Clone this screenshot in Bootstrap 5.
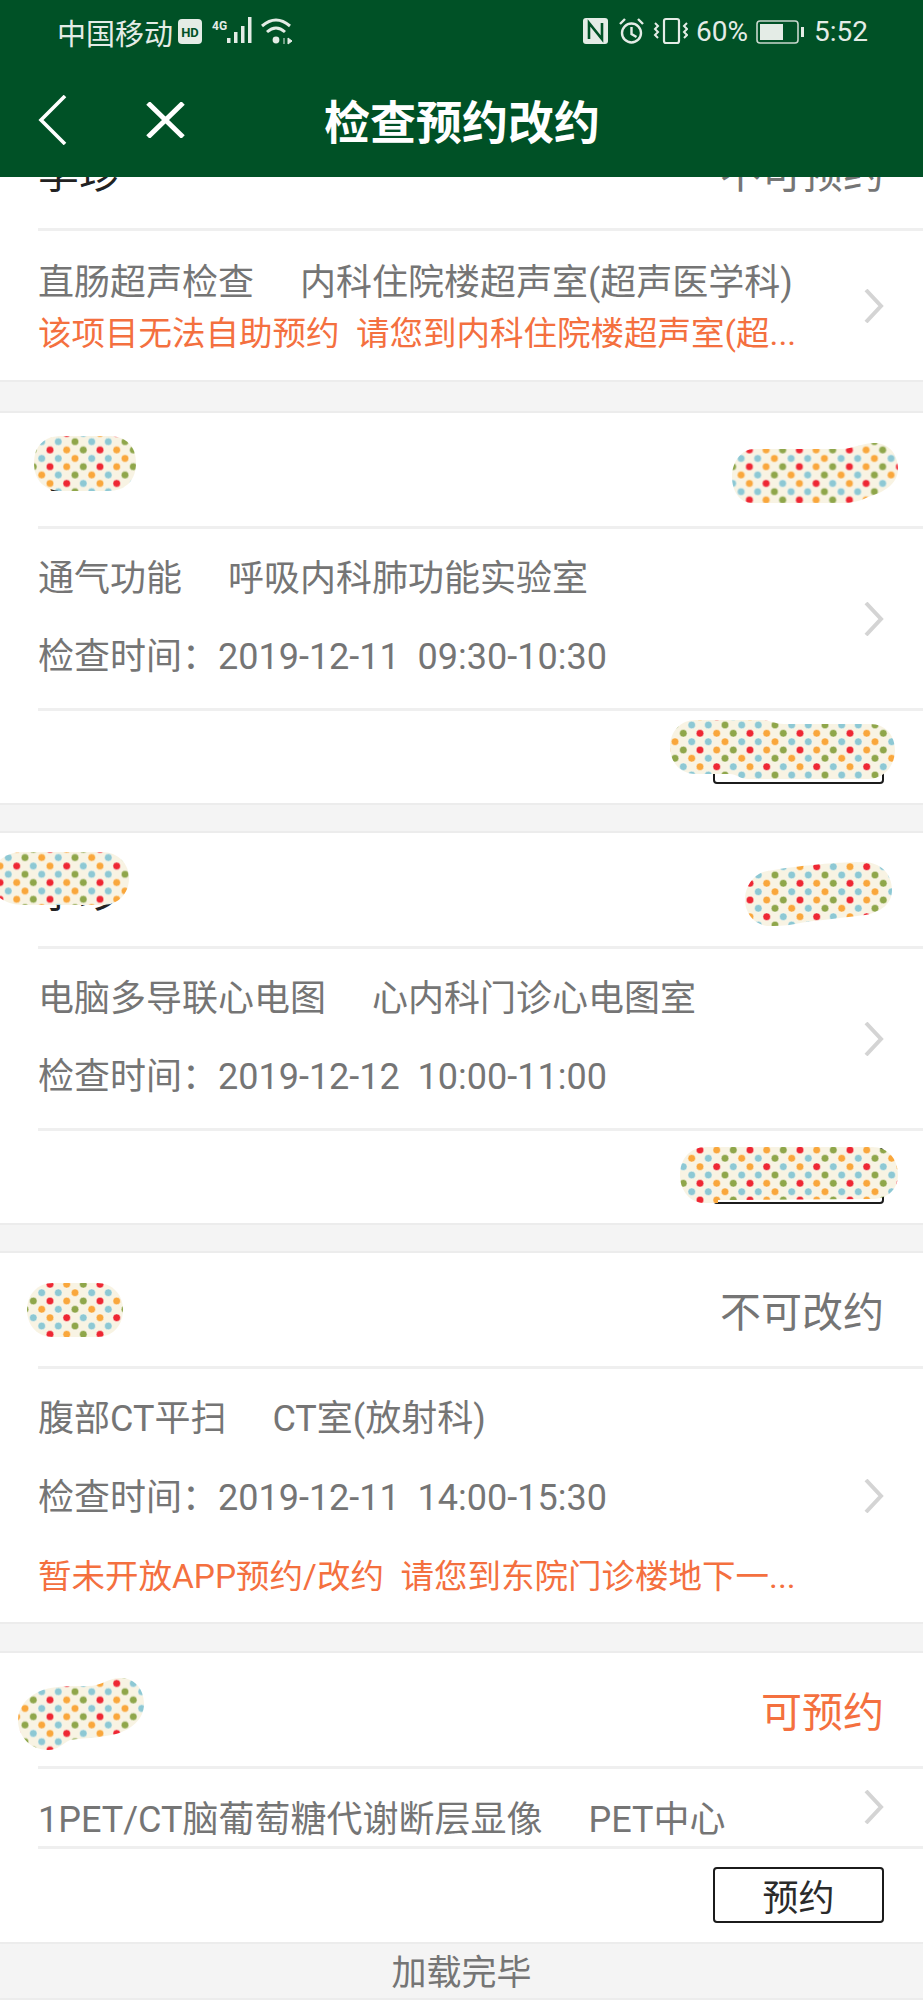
<!DOCTYPE html>
<html lang="zh">
<head>
<meta charset="utf-8">
<title>检查预约改约</title>
<link rel="stylesheet" href="https://cdn.jsdelivr.net/npm/bootstrap@5.3.0/dist/css/bootstrap.min.css">
<style>
body{background:#f4f4f4;font-family:Roboto,"Noto Sans CJK SC",sans-serif;color:#757575;width:923px;height:2000px;overflow:hidden}
.app-head{background:#005126;height:177px;color:#fff;position:relative}
.status-row{height:66px;padding:0 55px 2px 57px;font-size:28px;color:#e4ece6;line-height:1}
.status-cn{font-size:29px;width:121px;font-family:"Noto Sans CJK SC",sans-serif}
.title-row{height:111px;position:relative}
.title-text{font-size:46px;font-weight:700;line-height:1;margin:0 0 6px 324px;color:#fff;font-family:"Noto Sans CJK SC",sans-serif}
.ico-close{position:absolute;left:146px;top:36px}
.ico-back{position:absolute;left:38px;top:29px}
.rec{background:#fff;border-top:2px solid #ececec;border-bottom:2px solid #ececec;padding-left:38px;position:relative;margin-bottom:26px}
.rec-first{border-top:0;height:205px;margin-bottom:29px}
.rec-gap-last{margin-bottom:27px}
.rec-head{padding:8px 39px 0 0;height:116px;border-bottom:3px solid #efefef;font-size:41px;line-height:1}
.rec-first .rec-head{height:54px;padding-top:0;overflow:hidden;align-items:flex-start!important}
.rec-first .rec-head>*{margin-top:-23px}
.who{color:#222}
.state-open{color:#f4703f}
.rec-body{padding-right:39px;border-bottom:3px solid #efefef;font-size:36px;line-height:1.2}
.body-lines{display:flex;flex-direction:column;justify-content:center;gap:35px;flex:1;min-width:0}
.h-two{height:182px}
.h-plain{height:80px}
.h-tight{height:149px;border-bottom:0}
.h-tight .body-lines{gap:8.5px;padding-top:5px}
.h-three{height:253px;border-bottom:0}
.h-three .body-lines{gap:36px;padding-top:4px}
.gap-name{margin-right:46px}
.warn{color:#f4703f;font-size:33.5px;white-space:nowrap}
.rec-foot{height:92px;padding:17px 39px 0 0}
.rec-foot-last{height:93px;padding-top:18px}
.act-btn{width:171px;height:56px;border:2px solid #1b1b1b;border-radius:4px;background:#fff;color:#2b2b2b;font-size:36px;line-height:1;padding:0;font-family:"Noto Sans CJK SC",sans-serif}
.chev{flex:none}
.chev-high{margin-bottom:22px}
.end-note{font-size:35px;line-height:1;height:56px;text-align:center;padding-top:8px;border-bottom:2px solid #ececec;font-family:"Noto Sans CJK SC",sans-serif}
.patch{position:absolute;display:block;z-index:2}
.defs-holder{position:absolute;width:0;height:0}
.p-a{left:34px;top:23px}
.p-b{left:732px;top:30px}
.p-c{left:670px;top:307px}
.p-d{left:0;top:19px}
.p-e{left:745px;top:29px}
.p-f{left:680px;top:314px}
.p-g{left:27px;top:30px}
.p-h{left:18px;top:25px}
</style>
</head>
<body>
<svg class="defs-holder" aria-hidden="true"><defs>
<pattern id="dots" patternUnits="userSpaceOnUse" width="50" height="50">
<rect width="50" height="50" fill="#f8f3e3"/>
<g fill="#8fa64a" stroke="#fdfbf3" stroke-width=".5"><circle cx="0" cy="4" r="3.8"/><circle cx="50" cy="4" r="3.8"/><circle cx="8.3" cy="12.3" r="3.8"/><circle cx="8.3" cy="29" r="3.8"/><circle cx="0" cy="37.3" r="3.8"/><circle cx="50" cy="37.3" r="3.8"/></g>
<g fill="#8dc8d4" stroke="#fdfbf3" stroke-width=".5"><circle cx="16.7" cy="4" r="3.8"/><circle cx="33.3" cy="4" r="3.8"/><circle cx="16.7" cy="20.7" r="3.8"/><circle cx="33.3" cy="20.7" r="3.8"/><circle cx="33.3" cy="37.3" r="3.8"/><circle cx="8.3" cy="45.7" r="3.8"/></g>
<g fill="#ee2733" stroke="#fdfbf3" stroke-width=".5"><circle cx="25" cy="12.3" r="3.8"/><circle cx="25" cy="29" r="3.8"/><circle cx="41.7" cy="45.7" r="3.8"/></g>
<g fill="#f9a73c" stroke="#fdfbf3" stroke-width=".5"><circle cx="41.7" cy="12.3" r="3.8"/><circle cx="41.7" cy="29" r="3.8"/><circle cx="0" cy="20.7" r="3.8"/><circle cx="50" cy="20.7" r="3.8"/><circle cx="16.7" cy="37.3" r="3.8"/><circle cx="25" cy="45.7" r="3.8"/></g>
</pattern>
<pattern id="dots-a" href="#dots" x="-9" y="1.7"/>
<pattern id="dots-b" href="#dots" x="-7.6" y="-5.3"/>
<pattern id="dots-c" href="#dots" x="5" y="1"/>
<pattern id="dots-d" href="#dots" x="25" y="-31.7"/>
<pattern id="dots-e" href="#dots" x="30" y="9"/>
<pattern id="dots-f" href="#dots" x="-5" y="-26"/>
<pattern id="dots-g" href="#dots" x="-2" y="-11"/>
<pattern id="dots-h" href="#dots" x="7" y="9.7"/>
</defs></svg>

<header class="app-head">
  <div class="status-row d-flex align-items-center justify-content-between">
    <div class="d-flex align-items-center">
      <span class="status-cn text-nowrap">中国移动</span>
      <svg width="116" height="34" viewBox="0 0 116 34" fill="none">
        <rect x="0" y="4" width="24" height="25" rx="4" fill="#e4ece6"/>
        <text x="12" y="21.5" font-size="13" font-weight="700" text-anchor="middle" fill="#005126" font-family="Roboto">HD</text>
        <text x="34" y="15" font-size="12" font-weight="700" fill="#e4ece6" font-family="Roboto">4G</text>
        <g fill="#e4ece6"><rect x="49" y="23" width="3.5" height="5"/><rect x="56" y="17" width="3.5" height="11"/><rect x="63" y="11" width="3.5" height="17"/><rect x="70" y="2" width="3.5" height="26"/></g>
        <g stroke="#e4ece6" stroke-width="3"><path d="M84 11Q98 -1 112 11"/><path d="M89 17Q98 9 107 17"/></g>
        <circle cx="98" cy="25" r="3.4" fill="#e4ece6"/>
        <path d="M106 23v6M110 23l4 3-4 3z" stroke="#e4ece6" stroke-width="1" fill="#e4ece6"/>
      </svg>
    </div>
    <div class="d-flex align-items-center">
      <svg width="105" height="34" viewBox="0 0 105 34" fill="none">
        <rect x="0" y="3" width="25" height="26" rx="3" fill="#e4ece6"/>
        <path d="M6 24V8l13 16V8" stroke="#005126" stroke-width="2.6"/>
        <circle cx="48.5" cy="18" r="9.5" stroke="#e4ece6" stroke-width="2.4"/>
        <path d="M48.5 12v7l5 3M37 9l5-5M60 9l-5-5" stroke="#e4ece6" stroke-width="2.4"/>
        <rect x="81" y="4" width="15" height="24" rx="2" stroke="#e4ece6" stroke-width="2.2"/>
        <path d="M72 8l3 3-3 3 3 3-3 3 3 3M104 8l-3 3 3 3-3 3 3 3-3 3" stroke="#e4ece6" stroke-width="2"/>
      </svg>
      <span class="ms-2">60%</span>
      <svg class="ms-2" width="50" height="34" viewBox="0 0 50 34" fill="none">
        <rect x="1" y="6" width="41" height="22" rx="3" stroke="#c9d8ce" stroke-width="1.6"/>
        <rect x="4" y="9" width="23" height="16" fill="#e4ece6"/>
        <rect x="45" y="12" width="3" height="10" fill="#e4ece6"/>
      </svg>
      <span class="ms-2">5:52</span>
    </div>
  </div>
  <div class="title-row d-flex align-items-center">
    <svg class="ico-back" width="30" height="50" viewBox="0 0 30 50" fill="none"><path d="M27 1L3 25l24 24" stroke="#fff" stroke-width="3.6"/></svg>
    <svg class="ico-close" width="39" height="36" viewBox="0 0 39 36" fill="none"><path d="M2 1l35 34M37 1L2 35" stroke="#fff" stroke-width="5"/></svg>
    <h1 class="title-text">检查预约改约</h1>
  </div>
</header>

<section class="rec rec-first">
  <div class="rec-head d-flex justify-content-between align-items-end">
    <span class="who">李珍</span><span>不可预约</span>
  </div>
  <div class="rec-body h-tight d-flex align-items-center">
    <div class="body-lines">
      <div class="text-nowrap"><span class="gap-name">直肠超声检查</span><span>内科住院楼超声室(超声医学科)</span></div>
      <div class="warn">该项目无法自助预约&nbsp;&nbsp;请您到内科住院楼超声室(超...</div>
    </div>
    <svg class="chev" width="20" height="34" viewBox="0 0 20 34" fill="none"><path d="M2 1l15 16L2 33" stroke="#d4d4d4" stroke-width="4"/></svg>
  </div>
</section>

<section class="rec">
  <svg class="patch p-a" width="102" height="55"><path fill="url(#dots-a)" d="M28 0H74C92 0 102 10 102 27S92 55 74 55H28C10 55 0 44 0 27S10 0 28 0Z"/></svg>
  <svg class="patch p-b" width="166" height="60"><path fill="url(#dots-b)" d="M22 6H110C120 6 130 0 142 0C156 0 166 10 166 26C166 42 150 50 136 54C128 58 120 60 110 60H20C8 60 0 48 0 34C0 18 10 6 22 6Z"/></svg>
  <svg class="patch p-c" width="225" height="59"><path fill="url(#dots-c)" d="M26 0H90C100 0 104 4 114 4H200C216 4 225 16 225 30C225 46 214 59 198 59H78C70 59 66 54 60 54H26C10 54 0 42 0 27C0 12 10 0 26 0Z"/></svg>
  <div class="rec-head d-flex justify-content-between align-items-center">
    <span class="who">李珍</span>
  </div>
  <div class="rec-body h-two d-flex align-items-center">
    <div class="body-lines">
      <div><span class="gap-name">通气功能</span><span>呼吸内科肺功能实验室</span></div>
      <div>检查时间：2019-12-11&nbsp;&nbsp;09:30-10:30</div>
    </div>
    <svg class="chev" width="20" height="34" viewBox="0 0 20 34" fill="none"><path d="M2 1l15 16L2 33" stroke="#d4d4d4" stroke-width="4"/></svg>
  </div>
  <div class="rec-foot d-flex justify-content-end"><button type="button" class="btn act-btn">改约</button></div>
</section>

<section class="rec">
  <svg class="patch p-d" width="129" height="53"><path fill="url(#dots-d)" d="M0 8C6 3 12 0 24 0H102C118 0 129 12 129 26C129 42 118 53 102 53H24C12 53 6 50 0 46Z"/></svg>
  <svg class="patch p-e" width="147" height="64"><path fill="url(#dots-e)" d="M18 10C40 5 90 0 118 0C136 0 147 12 147 28C147 42 136 50 120 53C100 56 70 58 50 62C40 64 30 64 22 64C8 62 0 50 0 38C0 24 8 14 18 10Z"/></svg>
  <svg class="patch p-f" width="218" height="56"><path fill="url(#dots-f)" d="M26 0H192C208 0 218 12 218 28C218 42 208 52 192 52L60 53H38V56H22C8 54 0 42 0 28C0 12 10 0 26 0Z"/></svg>
  <div class="rec-head d-flex justify-content-between align-items-center">
    <span class="who">李珍</span>
  </div>
  <div class="rec-body h-two d-flex align-items-center">
    <div class="body-lines">
      <div><span class="gap-name">电脑多导联心电图</span><span>心内科门诊心电图室</span></div>
      <div>检查时间：2019-12-12&nbsp;&nbsp;10:00-11:00</div>
    </div>
    <svg class="chev" width="20" height="34" viewBox="0 0 20 34" fill="none"><path d="M2 1l15 16L2 33" stroke="#d4d4d4" stroke-width="4"/></svg>
  </div>
  <div class="rec-foot d-flex justify-content-end"><button type="button" class="btn act-btn">改约</button></div>
</section>

<section class="rec rec-gap-last">
  <svg class="patch p-g" width="96" height="54"><path fill="url(#dots-g)" d="M26 0H70C86 0 96 12 96 27S86 54 70 54H26C10 54 0 42 0 27S10 0 26 0Z"/></svg>
  <div class="rec-head d-flex justify-content-between align-items-center">
    <span class="who">李珍</span><span>不可改约</span>
  </div>
  <div class="rec-body h-three d-flex align-items-center">
    <div class="body-lines">
      <div><span class="gap-name">腹部CT平扫</span><span>CT室(放射科)</span></div>
      <div>检查时间：2019-12-11&nbsp;&nbsp;14:00-15:30</div>
      <div class="warn">暂未开放APP预约/改约&nbsp;&nbsp;请您到东院门诊楼地下一...</div>
    </div>
    <svg class="chev" width="20" height="34" viewBox="0 0 20 34" fill="none"><path d="M2 1l15 16L2 33" stroke="#d4d4d4" stroke-width="4"/></svg>
  </div>
</section>

<section class="rec mb-0">
  <svg class="patch p-h" width="126" height="72"><path fill="url(#dots-h)" d="M20 14C32 8 50 8 70 8C84 8 90 0 102 0C116 0 126 10 126 26C126 42 112 52 98 56C82 60 66 60 52 62C44 66 40 72 30 72C12 72 0 58 0 42C0 30 8 20 20 14Z"/></svg>
  <div class="rec-head d-flex justify-content-between align-items-center">
    <span class="who">李珍</span><span class="state-open">可预约</span>
  </div>
  <div class="rec-body h-plain d-flex align-items-end">
    <div class="body-lines"><div class="text-nowrap pb-1"><span class="gap-name">1PET/CT脑葡萄糖代谢断层显像</span><span>PET中心</span></div></div>
    <svg class="chev chev-high" width="20" height="34" viewBox="0 0 20 34" fill="none"><path d="M2 1l15 16L2 33" stroke="#d4d4d4" stroke-width="4"/></svg>
  </div>
  <div class="rec-foot rec-foot-last d-flex justify-content-end"><button type="button" class="btn act-btn">预约</button></div>
</section>

<footer class="end-note">加载完毕</footer>
</body>
</html>
